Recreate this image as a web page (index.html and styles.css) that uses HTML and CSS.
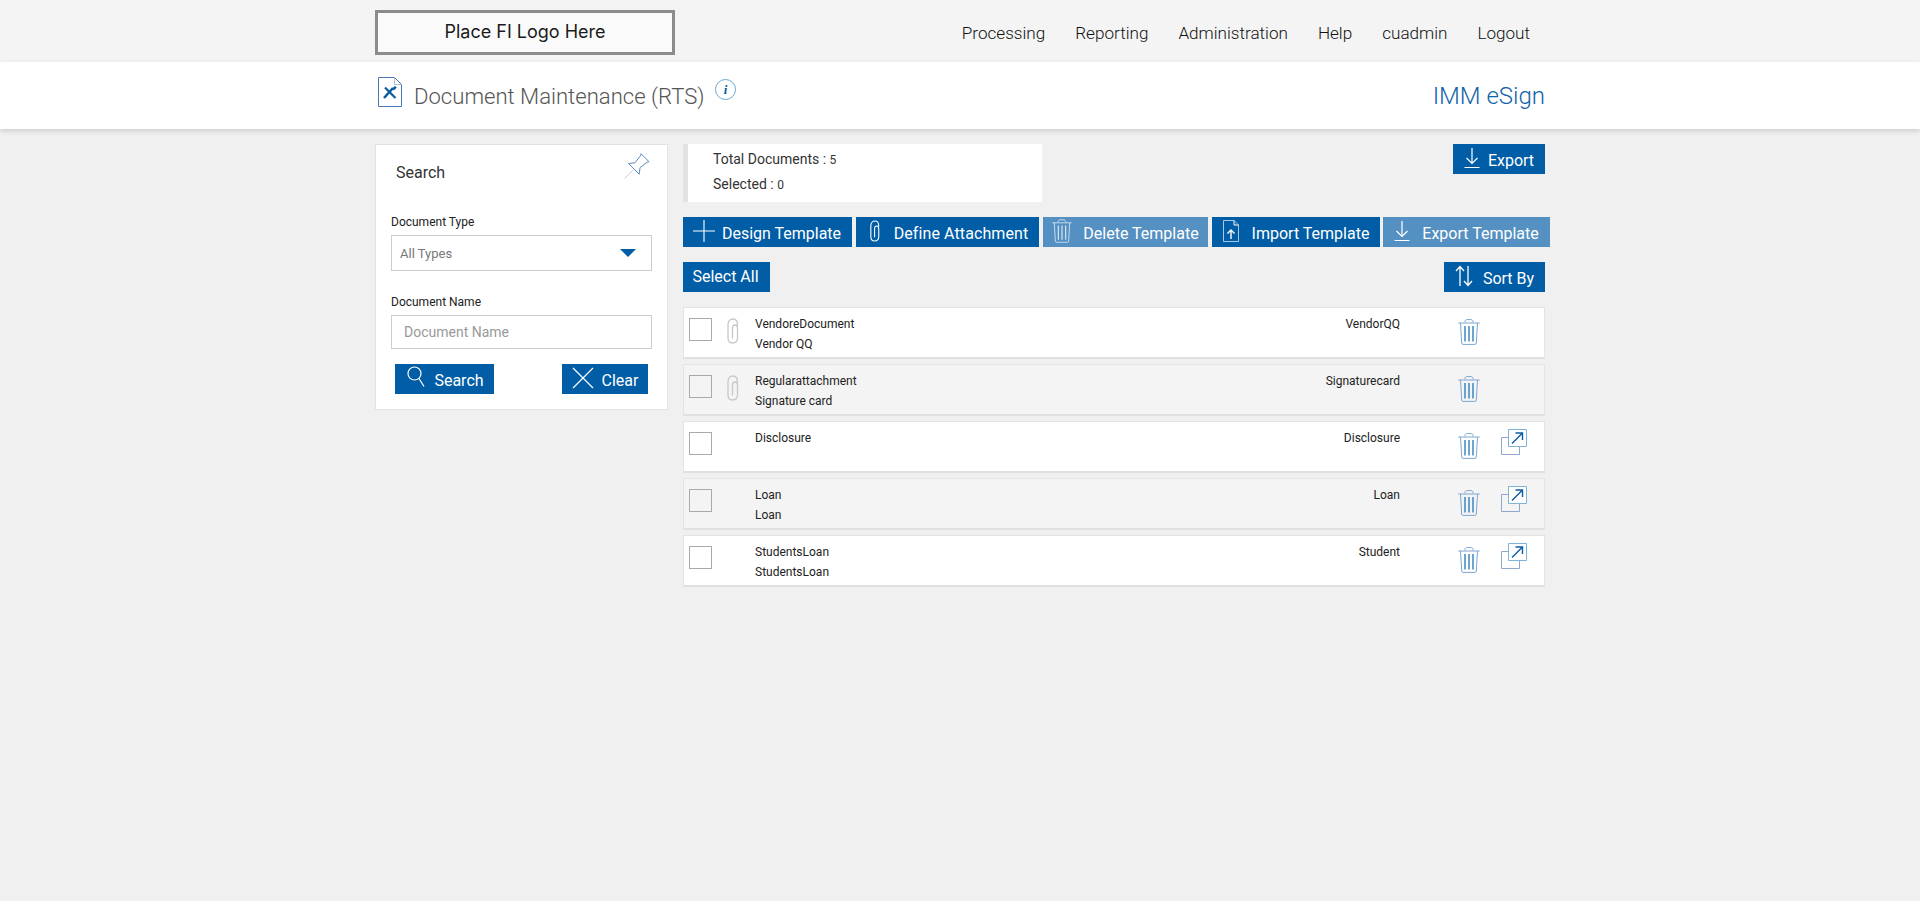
FILE: index.html
```html
<!DOCTYPE html>
<html lang="en">
<head>
<meta charset="utf-8">
<title>Document Maintenance (RTS)</title>
<link rel="stylesheet" href="styles.css">
</head>
<body>
<svg class="defs" width="0" height="0" aria-hidden="true">
  <defs>
    <symbol id="i-trash" viewBox="0 0 22 26">
      <path d="M7 3.500V2.500C7 1.200 8 .6 9 .6h4c1 0 2 .6 2 1.900v1M.3 4h21.400M2.500 4l1.200 20c.1.900.6 1.400 1.300 1.400h12c.7 0 1.200-.5 1.300-1.400L19.500 4" fill="none" stroke="#7fa6d0" stroke-width="1"/>
      <path d="M7 7v15.500M11 7v15.500M15 7v15.500" fill="none" stroke="#2f80c0" stroke-width="1.400"/>
    </symbol>
    <symbol id="i-trash-w" viewBox="0 0 22 26">
      <path d="M7 3.500V2.500C7 1.200 8 .6 9 .6h4c1 0 2 .6 2 1.900v1M.3 4h21.400M2.500 4l1.200 20c.1.900.6 1.400 1.300 1.400h12c.7 0 1.200-.5 1.300-1.400L19.500 4" fill="none" stroke="#cfe0ef" stroke-width="1"/>
      <path d="M7 7v15.500M11 7v15.500M15 7v15.500" fill="none" stroke="#cfe0ef" stroke-width="1.400"/>
    </symbol>
    <symbol id="i-clip" viewBox="0 0 12 26">
      <path d="M10.500 7C10.500 3 9 1 6 1S1 3 1 7V20C1 23.500 3 25 5.500 25S10.500 23.500 10.500 20V10.500C10.500 8 9.500 7 8 7S5.500 8 5.500 10.500V20" fill="none" stroke="currentColor" stroke-width="1.300" stroke-linecap="round"/>
    </symbol>
    <symbol id="i-down" viewBox="0 0 16 22">
      <path d="M8 1v15M2.500 11 8 16.500 13.500 11M.5 20.500h15" fill="none" stroke="currentColor" stroke-width="1.200"/>
    </symbol>
    <symbol id="i-pop" viewBox="0 0 26 26">
      <path d="M18.500 18v7.500H.5V8.500H7" fill="none" stroke="#8fa8d0" stroke-width="1"/>
      <path d="M7.500.5h18v17h-18z" fill="#fff" stroke="#7fb4da" stroke-width="1"/>
      <path d="M11 14.500 21.500 4M14.500 4h7v7" fill="none" stroke="#0a5ca5" stroke-width="1.400"/>
    </symbol>
  </defs>
</svg>

<header class="topbar">
  <div class="wrap topbar-in">
    <div class="logo">Place FI Logo Here</div>
    <nav class="nav">
      <a>Processing</a><a>Reporting</a><a>Administration</a><a>Help</a><a>cuadmin</a><a>Logout</a>
    </nav>
  </div>
</header>

<section class="pagehead">
  <div class="wrap pagehead-in">
    <div class="title-group">
      <svg class="doc-icon" viewBox="0 0 24 30" width="24" height="30">
        <path d="M.5.500h16l7 7v22H.5z" fill="#fff" stroke="#4a77b4" stroke-width="1"/>
        <path d="M16.500.500v7h7" fill="none" stroke="#a9c2df" stroke-width="1"/>
        <path d="M7 10.500l10.500 10.500" stroke="#0a5ca5" stroke-width="2.200" fill="none"/>
        <path d="M6 21l9-10" stroke="#0a5ca5" stroke-width="2.600" fill="none"/>
        <path d="M14 11.500l3-2.500 1.800 1.500-2.800 3z" fill="#0a5ca5"/>
      </svg>
      <h1 class="title">Document Maintenance (RTS)</h1>
      <svg class="info" viewBox="0 0 21 21" width="21" height="21">
        <circle cx="10.500" cy="10.500" r="10" fill="none" stroke="#6ba6d2" stroke-width="1"/>
        <text x="10.500" y="15" text-anchor="middle" class="info-i">i</text>
      </svg>
    </div>
    <div class="product">IMM eSign</div>
  </div>
</section>

<main class="wrap main">
  <aside class="panel">
    <div class="panel-head">
      <span class="panel-title">Search</span>
      <svg class="pin" viewBox="0 0 26 26" width="26" height="26">
        <path d="M.5 25.500 9.500 16.500" stroke="#c9d0d8" stroke-width="1" fill="none"/>
        <path d="M4.500 10.500l6.500-.8 5.500-7 .5-2 8 8-2 .5-7 5.500-.8 6.500z" fill="#fff" stroke="#5d8cc2" stroke-width="1"/>
      </svg>
    </div>
    <label class="lbl lbl-first">Document Type</label>
    <div class="select"><span>All Types</span><i class="caret"></i></div>
    <label class="lbl lbl-second">Document Name</label>
    <div class="input">Document Name</div>
    <div class="panel-actions">
      <button class="btn btn-search">
        <svg viewBox="0 0 18 22" width="18" height="22"><circle cx="7.500" cy="7.500" r="6.500" fill="none" stroke="currentColor" stroke-width="1.200"/><path d="M12 12.500l5 8" stroke="currentColor" stroke-width="1.200"/></svg>
        <span class="lab">Search</span>
      </button>
      <button class="btn btn-clear">
        <svg viewBox="0 0 22 22" width="22" height="22"><path d="M1 1l20 20M21 1 1 21" stroke="currentColor" stroke-width="1.200"/></svg>
        <span class="lab">Clear</span>
      </button>
    </div>
  </aside>

  <div class="content">
    <div class="summary-row">
      <div class="summary">
        <div class="sum-line">Total Documents : <small>5</small></div>
        <div class="sum-line">Selected : <small>0</small></div>
      </div>
      <button class="btn btn-export"><svg width="16" height="22"><use href="#i-down"/></svg><span class="lab">Export</span></button>
    </div>

    <div class="toolbar">
      <button class="btn tb-design">
        <svg viewBox="0 0 22 22" width="22" height="22"><path d="M11 0v22M0 11h22" stroke="currentColor" stroke-width="1.100"/></svg>
        <span class="lab">Design Template</span>
      </button>
      <button class="btn tb-define"><svg width="10" height="26"><use href="#i-clip"/></svg><span class="lab">Define Attachment</span></button>
      <button class="btn btn-off tb-delete"><svg width="20" height="24"><use href="#i-trash-w"/></svg><span class="lab">Delete Template</span></button>
      <button class="btn tb-import">
        <svg viewBox="0 0 16 22" width="16" height="22"><path d="M.5.500h10.500l4.500 4.500v16.500H.5z" fill="none" stroke="#a9c7e2" stroke-width="1"/><path d="M11 .5V5h4.500" fill="none" stroke="#fff" stroke-width="1"/><path d="M8 19v-9M4.500 13.500 8 10l3.500 3.500" fill="none" stroke="#fff" stroke-width="1.400"/></svg>
        <span class="lab">Import Template</span>
      </button>
      <button class="btn btn-off tb-export"><svg width="16" height="22"><use href="#i-down"/></svg><span class="lab">Export Template</span></button>
    </div>

    <div class="select-row">
      <button class="btn btn-plain">Select All</button>
      <button class="btn btn-sort">
        <svg viewBox="0 0 18 22" width="18" height="22"><path d="M5 21V2M1 6l4-4.500L9 6M13 1v19M9 16l4 4.500 4-4.500" fill="none" stroke="currentColor" stroke-width="1.300"/></svg>
        <span class="lab">Sort By</span>
      </button>
    </div>

    <ul class="rows">
      <li class="row">
        <span class="check"></span>
        <span class="clip"><svg width="12" height="26"><use href="#i-clip"/></svg></span>
        <div class="names"><div>VendoreDocument</div><div>Vendor QQ</div></div>
        <div class="code">VendorQQ</div>
        <span class="trash"><svg width="22" height="26"><use href="#i-trash"/></svg></span>
        <span class="pop"></span>
      </li>
      <li class="row alt">
        <span class="check"></span>
        <span class="clip"><svg width="12" height="26"><use href="#i-clip"/></svg></span>
        <div class="names"><div>Regularattachment</div><div>Signature card</div></div>
        <div class="code">Signaturecard</div>
        <span class="trash"><svg width="22" height="26"><use href="#i-trash"/></svg></span>
        <span class="pop"></span>
      </li>
      <li class="row">
        <span class="check"></span>
        <span class="clip"></span>
        <div class="names"><div>Disclosure</div></div>
        <div class="code">Disclosure</div>
        <span class="trash"><svg width="22" height="26"><use href="#i-trash"/></svg></span>
        <span class="pop"><svg width="26" height="26"><use href="#i-pop"/></svg></span>
      </li>
      <li class="row alt">
        <span class="check"></span>
        <span class="clip"></span>
        <div class="names"><div>Loan</div><div>Loan</div></div>
        <div class="code">Loan</div>
        <span class="trash"><svg width="22" height="26"><use href="#i-trash"/></svg></span>
        <span class="pop"><svg width="26" height="26"><use href="#i-pop"/></svg></span>
      </li>
      <li class="row">
        <span class="check"></span>
        <span class="clip"></span>
        <div class="names"><div>StudentsLoan</div><div>StudentsLoan</div></div>
        <div class="code">Student</div>
        <span class="trash"><svg width="22" height="26"><use href="#i-trash"/></svg></span>
        <span class="pop"><svg width="26" height="26"><use href="#i-pop"/></svg></span>
      </li>
    </ul>
  </div>
</main>
</body>
</html>
```

FILE: styles.css
```css
* { box-sizing: border-box; }
html, body { margin: 0; height: 100%; }
body {
  background: #f0f0f0;
  font-family: Roboto, "Liberation Sans", sans-serif;
  color: #222;
  overflow: hidden;
}
.defs { display: block; height: 0; }
.wrap { width: 1170px; margin-left: 375px; }

.topbar { height: 62px; background: #f4f4f4; }
.topbar-in { display: flex; justify-content: space-between; align-items: flex-start; }
.logo {
  width: 300px; height: 45px; margin-top: 10px;
  border: 3px solid #8c8c8c; background: #fafafa;
  display: flex; align-items: center; justify-content: center;
  font: 400 18px Inter, "Noto Sans", sans-serif; color: #1a1a1a;
  padding-bottom: 3px;
}
.nav { display: flex; gap: 30px; padding: 24px 15px 0 0; font-size: 17.100px; font-weight: 300; line-height: 19px; color: #111; }

.pagehead { height: 67px; background: #fff; box-shadow: 0 2px 5px rgba(0,0,0,.14); position: relative; }
.pagehead-in { display: flex; justify-content: space-between; align-items: flex-start; }
.title-group { display: flex; align-items: flex-start; }
.doc-icon { margin-top: 15px; margin-left: 3px; flex: none; }
.title { margin: 20px 0 0 12px; font-size: 22.100px; font-weight: 300; line-height: 28px; color: #555; }
.info { margin: 17px 0 0 10px; flex: none; }
.info-i { font: italic 700 13px "Liberation Serif", serif; fill: #005da6; }
.product { margin-top: 20px; font-size: 24px; font-weight: 300; line-height: 28px; color: #0f62aa; }

.main { display: flex; align-items: flex-start; gap: 15px; padding-top: 15px; }

.panel {
  width: 293px; height: 266px; flex: none; background: #fff;
  border: 1px solid #e3e3e3; padding: 0 15px;
}
.panel-head { height: 50px; display: flex; justify-content: space-between; padding: 8px 0 0 5px; position: relative; }
.panel-title { font-size: 16px; line-height: 20px; margin-top: 10px; color: #333; }
.pin { margin: 0 2px 0 0; }
.lbl { display: block; font-size: 12px; line-height: 14px; color: #222; }
.lbl-first { margin-top: 20px; }
.lbl-second { margin-top: 24px; }
.select, .input {
  width: 261px; border: 1px solid #ccc; background: #fff; color: #777;
  font-size: 13px; display: flex; align-items: center;
}
.select { height: 36px; margin-top: 6px; padding: 0 15px 0 8px; justify-content: space-between; }
.caret { width: 0; height: 0; border: 8px solid transparent; border-top: 8px solid #005da6; border-bottom: 0; }
.input { height: 34px; margin-top: 6px; padding-left: 12px; font-size: 14px; color: #999; }
.panel-actions { display: flex; justify-content: space-between; padding: 15px 4px 0; }

.btn {
  height: 30px; border: 0; padding: 0; background: #005da6; color: #fff;
  font: 400 16px/30px Roboto, sans-serif;
  display: inline-flex; align-items: center; justify-content: center; white-space: nowrap;
  flex: none;
}
.btn svg { flex: none; }
.lab { padding-top: 3px; }
.btn-off { background: #5590c2; }
.btn-search { width: 99px; gap: 9px; padding-left: 2px; }
.btn-search svg { margin-bottom: 5px; }
.btn-clear { width: 86px; gap: 8px; }
.btn-clear svg { margin-bottom: 3px; }
.btn-export { width: 92px; gap: 8px; }
.btn-export svg { margin-bottom: 2px; }

.content { width: 862px; flex: none; }
.summary-row { display: flex; justify-content: space-between; align-items: flex-start; }
.summary {
  width: 359px; height: 58px; background: #fff; border-left: 5px solid #e2e2e2;
  padding: 3px 0 0 25px; font-size: 14px; line-height: 24px; color: #333;
}
.summary small { font-size: 12px; }

.toolbar { display: flex; width: 867px; margin-top: 15px; gap: 4px; }
.toolbar .btn svg { margin-bottom: 3px; }
.tb-design { width: 169px; gap: 7px; padding-right: 1px; }
.tb-define { width: 183px; gap: 14px; letter-spacing: .1px; padding-left: 3px; }
.tb-delete { width: 165px; gap: 11px; }
.tb-import { width: 168px; gap: 13px; }
.tb-export { width: 167px; gap: 12px; margin-left: -1px; }

.select-row { display: flex; justify-content: space-between; margin-top: 15px; }
.btn-plain { width: 87px; padding-right: 2px; }
.btn-sort { width: 101px; gap: 10px; }
.btn-sort svg { margin-bottom: 3px; }

.rows { list-style: none; margin: 15px 0 0; padding: 0; display: flex; flex-direction: column; gap: 5px; }
.row {
  height: 52px; display: flex; align-items: flex-start; background: #fff;
  border: 1px solid #e4e4e4; border-bottom: 2px solid #e0e0e0;
  font-size: 12px; color: #222;
}
.row.alt { background: #f4f4f4; }
.check { width: 23px; height: 23px; margin: 10px 0 0 5px; border: 1px solid #aaa; background: transparent; flex: none; }
.clip { width: 12px; margin: 10px 0 0 15px; color: #c8c8c8; flex: none; height: 26px; }
.names { width: 300px; margin-left: 16px; line-height: 20px; padding-top: 6px; }
.code { flex: 1; text-align: right; line-height: 20px; padding-top: 6px; }
.trash { width: 22px; height: 26px; margin: 11px 0 0 58px; flex: none; }
.pop { width: 26px; height: 26px; margin: 7px 17px 0 21px; flex: none; }
```
